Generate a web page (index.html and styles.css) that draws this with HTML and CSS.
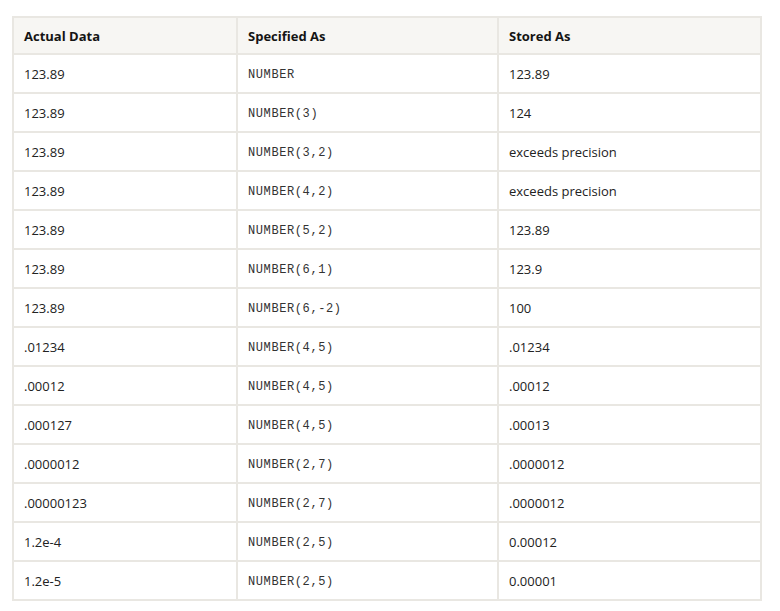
FILE: index.html
```html
<!DOCTYPE html>
<html>
<head>
<meta charset="utf-8">
<link rel="stylesheet" href="styles.css">
</head>
<body>
<div class="page">
<table class="data">
<thead>
<tr><th class="c1">Actual Data</th><th class="c2">Specified As</th><th class="c3">Stored As</th></tr>
</thead>
<tbody>
<tr><td>123.89</td><td class="mono">NUMBER</td><td>123.89</td></tr>
<tr><td>123.89</td><td class="mono">NUMBER(3)</td><td>124</td></tr>
<tr><td>123.89</td><td class="mono">NUMBER(3,2)</td><td>exceeds precision</td></tr>
<tr><td>123.89</td><td class="mono">NUMBER(4,2)</td><td>exceeds precision</td></tr>
<tr><td>123.89</td><td class="mono">NUMBER(5,2)</td><td>123.89</td></tr>
<tr><td>123.89</td><td class="mono">NUMBER(6,1)</td><td>123.9</td></tr>
<tr><td>123.89</td><td class="mono">NUMBER(6,-2)</td><td>100</td></tr>
<tr><td>.01234</td><td class="mono">NUMBER(4,5)</td><td>.01234</td></tr>
<tr><td>.00012</td><td class="mono">NUMBER(4,5)</td><td>.00012</td></tr>
<tr><td>.000127</td><td class="mono">NUMBER(4,5)</td><td>.00013</td></tr>
<tr><td>.0000012</td><td class="mono">NUMBER(2,7)</td><td>.0000012</td></tr>
<tr><td>.00000123</td><td class="mono">NUMBER(2,7)</td><td>.0000012</td></tr>
<tr><td>1.2e-4</td><td class="mono">NUMBER(2,5)</td><td>0.00012</td></tr>
<tr><td>1.2e-5</td><td class="mono">NUMBER(2,5)</td><td>0.00001</td></tr>
</tbody>
</table>
</div>
</body>
</html>
```
FILE: styles.css
```css
html, body {
  margin: 0;
  padding: 0;
  background: #ffffff;
}

.page {
  padding: 16px 0 0 12px;
}

.data {
  border-collapse: separate;
  border-spacing: 0;
  table-layout: fixed;
  width: 750px;
  border-top: 2px solid #e9e7e2;
  border-left: 2px solid #e9e7e2;
  font-family: "Open Sans", "Noto Sans", sans-serif;
  font-size: 13px;
  color: #222222;
}

.data th,
.data td {
  border-right: 2px solid #e9e7e2;
  border-bottom: 2px solid #e9e7e2;
  padding: 0 10px;
  text-align: left;
  vertical-align: middle;
  white-space: nowrap;
  line-height: 18px;
}

.data th {
  background: #f7f6f3;
  font-weight: 700;
  color: #141414;
  height: 35px;
}

.data td {
  height: 37px;
}

.data .c1 { width: 202px; }
.data .c2 { width: 239px; }
.data .c3 { width: 241px; }

.data td.mono {
  font-family: "Liberation Mono", "Courier New", monospace;
  font-size: 12px;
  letter-spacing: 0.6px;
  color: #333333;
  padding-top: 3px;
  height: 34px;
}
```
